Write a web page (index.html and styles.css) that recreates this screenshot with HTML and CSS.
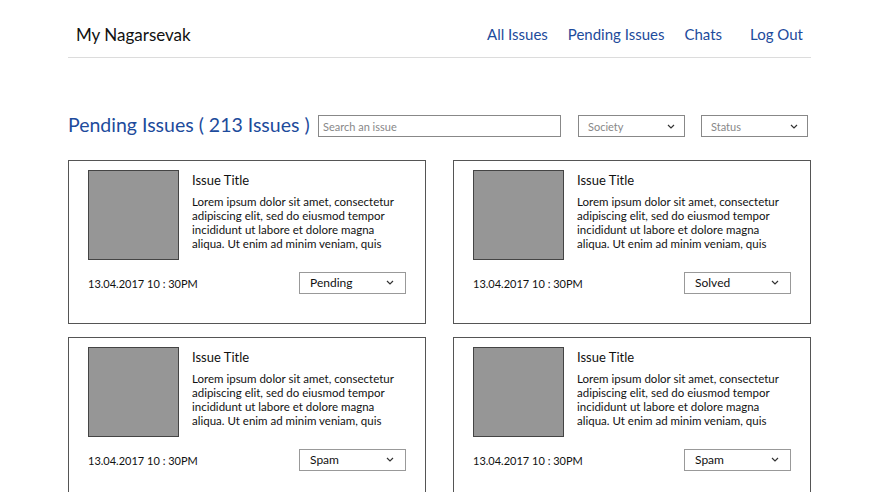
FILE: index.html
```html
<!DOCTYPE html>
<html>
<head>
<meta charset="utf-8">
<link rel="stylesheet" href="styles.css">
</head>
<body>
<div class="page">
  <header class="header">
    <div class="brand">My Nagarsevak</div>
    <nav class="nav">
      <a class="nav-link">All Issues</a>
      <a class="nav-link">Pending Issues</a>
      <a class="nav-link">Chats</a>
      <a class="nav-link nav-last">Log Out</a>
    </nav>
  </header>

  <div class="toolbar">
    <h1 class="title">Pending Issues ( 213 Issues )</h1>
    <div class="search">Search an issue</div>
    <div class="filter filter-society"><span>Society</span><svg class="chev" viewBox="0 0 8 5" width="8" height="5"><path d="M1 1 L4 4 L7 1" fill="none" stroke="#333" stroke-width="1.2"/></svg></div>
    <div class="filter"><span>Status</span><svg class="chev" viewBox="0 0 8 5" width="8" height="5"><path d="M1 1 L4 4 L7 1" fill="none" stroke="#333" stroke-width="1.2"/></svg></div>
  </div>

  <div class="grid">
    <div class="card">
      <div class="card-top">
        <div class="thumb"></div>
        <div class="card-body">
          <div class="card-title">Issue Title</div>
          <p class="card-text">Lorem ipsum dolor sit amet, consectetur adipiscing elit, sed do eiusmod tempor incididunt ut labore et dolore magna aliqua. Ut enim ad minim veniam, quis</p>
        </div>
      </div>
      <div class="card-bottom">
        <span class="date">13.04.2017 10 : 30PM</span>
        <div class="status"><span>Pending</span><svg class="chev" viewBox="0 0 8 5" width="8" height="5"><path d="M1 1 L4 4 L7 1" fill="none" stroke="#333" stroke-width="1.2"/></svg></div>
      </div>
    </div>
    <div class="card">
      <div class="card-top">
        <div class="thumb"></div>
        <div class="card-body">
          <div class="card-title">Issue Title</div>
          <p class="card-text">Lorem ipsum dolor sit amet, consectetur adipiscing elit, sed do eiusmod tempor incididunt ut labore et dolore magna aliqua. Ut enim ad minim veniam, quis</p>
        </div>
      </div>
      <div class="card-bottom">
        <span class="date">13.04.2017 10 : 30PM</span>
        <div class="status"><span>Solved</span><svg class="chev" viewBox="0 0 8 5" width="8" height="5"><path d="M1 1 L4 4 L7 1" fill="none" stroke="#333" stroke-width="1.2"/></svg></div>
      </div>
    </div>
    <div class="card">
      <div class="card-top">
        <div class="thumb"></div>
        <div class="card-body">
          <div class="card-title">Issue Title</div>
          <p class="card-text">Lorem ipsum dolor sit amet, consectetur adipiscing elit, sed do eiusmod tempor incididunt ut labore et dolore magna aliqua. Ut enim ad minim veniam, quis</p>
        </div>
      </div>
      <div class="card-bottom">
        <span class="date">13.04.2017 10 : 30PM</span>
        <div class="status"><span>Spam</span><svg class="chev" viewBox="0 0 8 5" width="8" height="5"><path d="M1 1 L4 4 L7 1" fill="none" stroke="#333" stroke-width="1.2"/></svg></div>
      </div>
    </div>
    <div class="card">
      <div class="card-top">
        <div class="thumb"></div>
        <div class="card-body">
          <div class="card-title">Issue Title</div>
          <p class="card-text">Lorem ipsum dolor sit amet, consectetur adipiscing elit, sed do eiusmod tempor incididunt ut labore et dolore magna aliqua. Ut enim ad minim veniam, quis</p>
        </div>
      </div>
      <div class="card-bottom">
        <span class="date">13.04.2017 10 : 30PM</span>
        <div class="status"><span>Spam</span><svg class="chev" viewBox="0 0 8 5" width="8" height="5"><path d="M1 1 L4 4 L7 1" fill="none" stroke="#333" stroke-width="1.2"/></svg></div>
      </div>
    </div>
  </div>
</div>
</body>
</html>
```

FILE: styles.css
```css
* { box-sizing: border-box; }
html, body { margin: 0; padding: 0; background: #fff; }
body {
  font-family: Lato, "Open Sans", sans-serif;
  color: #111;
  overflow: hidden;
  height: 492px;
}
.page {
  width: 743px;
  margin-left: 68px;
}
.header {
  display: flex;
  align-items: center;
  justify-content: space-between;
  height: 58px;
  padding: 11px 8px 0 8px;
  border-bottom: 1px solid #dcdcdc;
}
.brand {
  font-size: 17px;
  color: #111;
}
.nav {
  display: flex;
  align-items: center;
}
.nav-link {
  font-size: 15px;
  color: #1d4b9c;
  margin-left: 20px;
}
.nav-link.nav-last { margin-left: 28px; }

.toolbar {
  display: flex;
  align-items: center;
  margin-top: 56px;
  height: 24px;
}
.title {
  margin: 0;
  font-weight: normal;
  font-size: 19.5px;
  color: #1d4b9c;
  white-space: nowrap;
  width: 250px;
  position: relative;
  top: -2px;
}
.search {
  width: 243px;
  height: 22px;
  border: 1px solid #888;
  font-size: 11px;
  color: #888;
  padding: 4px 4px 0;
}
.filter {
  width: 107px;
  height: 22px;
  border: 1px solid #888;
  margin-left: 17px;
  display: flex;
  align-items: center;
  justify-content: space-between;
  padding: 0 9px 0 9px;
  font-size: 11px;
  color: #888;
}
.filter + .filter { margin-left: 16px; }
.chev { display: block; }

.grid {
  display: grid;
  grid-template-columns: 358px 358px;
  column-gap: 27px;
  row-gap: 13px;
  margin-top: 22px;
}
.card {
  border: 1.5px solid #555;
  height: 164px;
  padding: 8.5px 19px 0 19px;
}
.card-top {
  display: flex;
}
.thumb {
  width: 91px;
  height: 90px;
  background: #969696;
  border: 1px solid #444;
  flex: none;
}
.card-body {
  margin-left: 13px;
  padding-top: 2px;
}
.card-title {
  font-size: 13px;
  line-height: 16px;
}
.card-text {
  margin: 7px 0 0;
  font-size: 11.5px;
  line-height: 14px;
  width: 215px;
}
.card-bottom {
  display: flex;
  justify-content: space-between;
  align-items: center;
  margin-top: 12px;
}
.date {
  font-size: 11px;
  margin-top: 2px;
}
.status {
  width: 107px;
  height: 22px;
  border: 1px solid #999;
  display: flex;
  align-items: center;
  justify-content: space-between;
  padding: 0 11px 0 10px;
  font-size: 12px;
  color: #111;
}
```
